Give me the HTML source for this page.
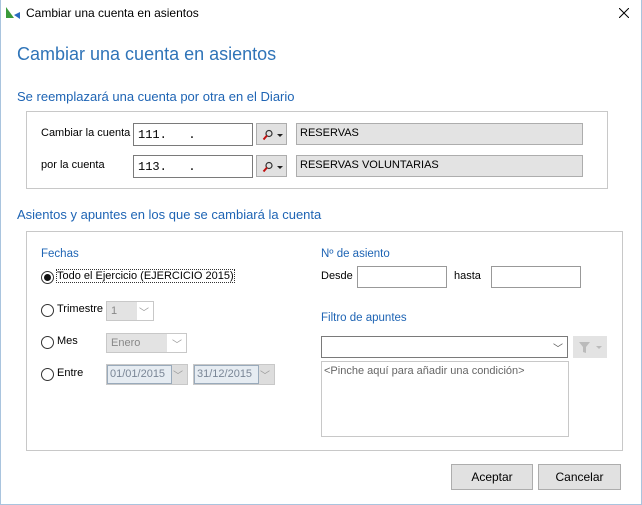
<!DOCTYPE html>
<html><head><meta charset="utf-8"><style>
*{margin:0;padding:0;box-sizing:border-box}
body{width:642px;height:505px;background:#fff;font-family:"Liberation Sans",sans-serif;font-size:11px;color:#000;position:relative;overflow:hidden}
.a{position:absolute;white-space:nowrap}
.win{position:absolute;left:0;top:0;width:642px;height:505px;border:1px solid #a9c4de;border-top:none}
.box{position:absolute;border:1px solid #c8c8c8}
.inp{position:absolute;border:1px solid #7a7a7a;background:#fff}
.gray{position:absolute;border:1px solid #adadad;background:#e3e3e3}
.btn{position:absolute;border:1px solid #adadad;background:#e1e1e1;text-align:center}
.h{color:#1e64b4;font-size:13px}
.h2{color:#1e64b4;font-size:11.5px}
.rad{position:absolute;width:13px;height:13px;border:1px solid #333;border-radius:50%;background:#fff}
.cmb{position:absolute;border:1px solid #c8c8c8;background:#fff;color:#888}
.chev{position:absolute;right:4px;top:2px;color:#999;font-size:10px}
</style></head><body>
<div class="win"></div>
<svg class="a" style="left:5px;top:6px" width="16" height="14"><path d="M1 1 L1 12 L9 12 Z" fill="#3a9a3a"/><path d="M9 9 L15 6 L15 13 Z" fill="#2a6ac0"/></svg>
<div class="a" style="left:26px;top:6px;font-size:12px">Cambiar una cuenta en asientos</div>
<svg class="a" style="left:619px;top:8px" width="10" height="10"><path d="M0 0L10 10M10 0L0 10" stroke="#000" stroke-width="1"/></svg>
<div class="a" style="left:17px;top:44px;font-size:18px;color:#2f74b8">Cambiar una cuenta en asientos</div>
<div class="a h" style="left:17px;top:89px">Se reemplazará una cuenta por otra en el Diario</div>
<div class="box" style="left:26px;top:111px;width:582px;height:78px"></div>
<div class="a" style="left:41px;top:127px">Cambiar la cuenta</div>
<div class="inp" style="left:133px;top:123px;width:120px;height:23px"><span class="a" style="left:4px;top:4px;font-family:'Liberation Mono',monospace;font-size:12px">111.&nbsp;&nbsp;&nbsp;.</span></div>
<div class="btn" style="left:256px;top:123px;width:31px;height:22px"><svg class="a" style="left:5px;top:5px" width="22" height="12"><circle cx="7" cy="4.5" r="3" fill="none" stroke="#333" stroke-width="1.2"/><path d="M5 6.5L1.5 10.5" stroke="#c01010" stroke-width="2"/><path d="M15 5h6l-3 3z" fill="#222"/></svg></div>
<div class="gray" style="left:296px;top:123px;width:287px;height:22px"><span class="a" style="left:3px;top:3px">RESERVAS</span></div>
<div class="a" style="left:41px;top:159px">por la cuenta</div>
<div class="inp" style="left:133px;top:155px;width:120px;height:23px"><span class="a" style="left:4px;top:4px;font-family:'Liberation Mono',monospace;font-size:12px">113.&nbsp;&nbsp;&nbsp;.</span></div>
<div class="btn" style="left:256px;top:155px;width:31px;height:22px"><svg class="a" style="left:5px;top:5px" width="22" height="12"><circle cx="7" cy="4.5" r="3" fill="none" stroke="#333" stroke-width="1.2"/><path d="M5 6.5L1.5 10.5" stroke="#c01010" stroke-width="2"/><path d="M15 5h6l-3 3z" fill="#222"/></svg></div>
<div class="gray" style="left:296px;top:155px;width:287px;height:22px"><span class="a" style="left:3px;top:3px">RESERVAS VOLUNTARIAS</span></div>
<div class="a h" style="left:17px;top:207px">Asientos y apuntes en los que se cambiará la cuenta</div>
<div class="box" style="left:26px;top:231px;width:597px;height:220px"></div>
<div class="a h2" style="left:41px;top:248px">Fechas</div>
<div class="rad" style="left:41px;top:271px"><div style="position:absolute;left:2px;top:2px;width:7px;height:7px;border-radius:50%;background:#111"></div></div>
<div class="a" style="left:57px;top:270px;outline:1px dotted #333">Todo el Ejercicio (EJERCICIO 2015)</div>
<div class="rad" style="left:41px;top:304px"></div><div class="a" style="left:57px;top:303px">Trimestre</div>
<div class="cmb" style="left:106px;top:301px;width:48px;height:20px"><span class="a" style="left:0;top:0;width:30px;height:18px;background:#e3e3e3"></span><span class="a" style="left:4px;top:3px">1</span><span class="chev">﹀</span></div>
<div class="rad" style="left:41px;top:336px"></div><div class="a" style="left:57px;top:335px">Mes</div>
<div class="cmb" style="left:106px;top:333px;width:81px;height:20px"><span class="a" style="left:0;top:0;width:60px;height:18px;background:#e3e3e3"></span><span class="a" style="left:4px;top:3px">Enero</span><span class="chev">﹀</span></div>
<div class="rad" style="left:41px;top:368px"></div><div class="a" style="left:57px;top:367px">Entre</div>
<div class="cmb" style="left:106px;top:364px;width:82px;height:21px;background:#ddd"><span class="a" style="left:0;top:0;width:65px;height:19px;background:#e6ecf2;border:1px solid #9ab"></span><span class="a" style="left:3px;top:3px;color:#7a8696">01/01/2015</span><span class="chev">﹀</span></div>
<div class="cmb" style="left:193px;top:364px;width:82px;height:21px;background:#ddd"><span class="a" style="left:0;top:0;width:65px;height:19px;background:#e6ecf2;border:1px solid #9ab"></span><span class="a" style="left:3px;top:3px;color:#7a8696">31/12/2015</span><span class="chev">﹀</span></div>
<div class="a h2" style="left:321px;top:248px">Nº de asiento</div>
<div class="a" style="left:321px;top:270px">Desde</div>
<div class="inp" style="left:357px;top:266px;width:90px;height:22px;border-color:#999"></div>
<div class="a" style="left:454px;top:270px">hasta</div>
<div class="inp" style="left:491px;top:266px;width:90px;height:22px;border-color:#999"></div>
<div class="a h2" style="left:321px;top:312px">Filtro de apuntes</div>
<div class="inp" style="left:321px;top:336px;width:247px;height:22px"><span class="chev" style="top:3px;color:#555">﹀</span></div>
<div class="a" style="left:573px;top:336px;width:34px;height:22px;background:#e3e3e3"><svg class="a" style="left:5px;top:5px" width="26" height="13"><path d="M1 1h11l-4 5v6l-3-1v-5z" fill="#bbb"/><path d="M18 5h6l-3 3z" fill="#bbb"/></svg></div>
<div class="a" style="left:321px;top:361px;width:248px;height:76px;border:1px solid #c8c8c8;color:#666;font-size:11px;padding:3px 2px">&lt;Pinche aquí para añadir una condición&gt;</div>
<div class="btn" style="left:451px;top:464px;width:82px;height:26px;line-height:24px;font-size:12px">Aceptar</div>
<div class="btn" style="left:538px;top:464px;width:83px;height:26px;line-height:24px;font-size:12px">Cancelar</div>
</body></html>
